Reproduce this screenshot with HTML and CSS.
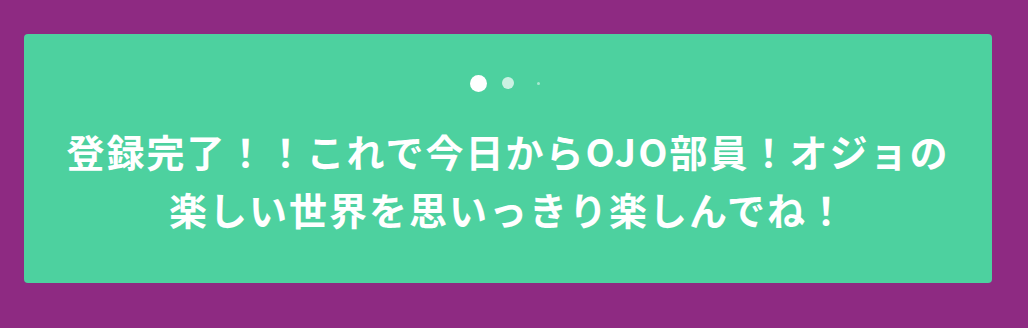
FILE: index.html
```html
<!DOCTYPE html>
<html lang="ja">
<head>
  <meta charset="UTF-8">
  <meta name="viewport" content="width=device-width, initial-scale=1.0">
  <title>登録完了</title>
  <link rel="stylesheet" href="styles.css">
</head>
<body>
  <section class="done__card">
    <ul class="dots">
      <li class="dots__item dots__item--lg"></li>
      <li class="dots__item dots__item--md"></li>
      <li class="dots__item dots__item--sm"></li>
    </ul>
    <p class="done__msg">登録完了！！これで今日からOJO部員！オジョの<br>楽しい世界を思いっきり楽しんでね！</p>
  </section>
</body>
</html>
```

FILE: styles.css
```css
* {
  margin: 0;
  padding: 0;
  box-sizing: border-box;
}

ul,
ol {
  list-style: none;
}

body {
  background: #8e2a82;
  padding: 34px 0 0 24px;
  height: 100vh;
  overflow: hidden;
}

.done__card {
  width: 968px;
  height: 249px;
  padding-top: 40px;
  background: #4dd19f;
  border-radius: 4px;
}

.dots {
  display: flex;
  justify-content: center;
  height: 18px;
}

.dots__item {
  display: flex;
  align-items: center;
  justify-content: center;
  width: 30px;
}

.dots__item::before {
  content: "";
  display: block;
  border-radius: 50%;
  background: #fff;
}

.dots__item--lg::before {
  width: 17px;
  height: 17px;
}

.dots__item--md::before {
  width: 12px;
  height: 12px;
  opacity: 0.7;
}

.dots__item--sm::before {
  width: 3px;
  height: 3px;
  opacity: 0.5;
}

.done__msg {
  margin-top: 30px;
  color: #fff;
  font-family: "Noto Sans CJK JP", sans-serif;
  font-weight: bold;
  font-size: 38px;
  line-height: 58px;
  letter-spacing: 2px;
  text-align: center;
}
```
